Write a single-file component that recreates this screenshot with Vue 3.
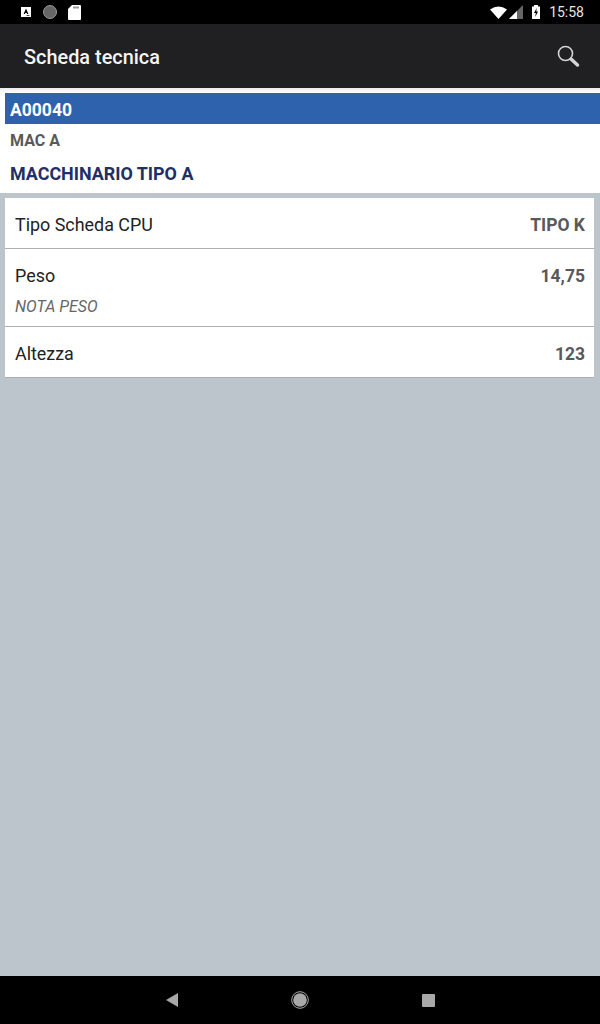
<template>
  <div class="screen">
    <div class="statusbar">
      <div class="status-left">
        <svg width="12" height="12" viewBox="0 0 12 12"><rect x="1" y="1" width="10" height="10" fill="#fff"/><path d="M6 2.600 3.600 8h1.300l.4-1h1.400l.4 1h1.300L6 2.600z" fill="#000"/><rect x="6.500" y="9" width="3" height="1" fill="#555"/></svg>
        <svg width="14" height="14" viewBox="0 0 14 14"><circle cx="7" cy="7" r="6.500" fill="#666" stroke="#999" stroke-width="1"/></svg>
        <svg width="13" height="15" viewBox="0 0 13 15"><path d="M4 0h8a1 1 0 0 1 1 1v13a1 1 0 0 1-1 1H1a1 1 0 0 1-1-1V4z" fill="#fff"/><rect x="5" y="1.500" width="6" height="2" fill="#999"/></svg>
      </div>
      <div class="status-right">
        <svg class="wifi" width="17" height="13" viewBox="0 0 17 13"><path d="M0 3.500Q8.500-2.500 17 3.500L8.500 13z" fill="#fff"/></svg>
        <svg class="signal" width="14" height="14" viewBox="0 0 14 14"><path d="M14 0v14H0z" fill="#666"/><path d="M8 6v8H0z" fill="#fff"/></svg>
        <svg class="battery" width="8" height="14" viewBox="0 0 8 14"><path d="M2 0h4v1.500h2V14H0V1.500h2z" fill="#fff"/><path d="M4.700 3 2 8h1.800l-.6 4 2.900-5.500H4.300z" fill="#000"/></svg>
        <span class="time">15:58</span>
      </div>
    </div>

    <header class="toolbar">
      <span class="title">Scheda tecnica</span>
      <svg class="search" width="24" height="24" viewBox="0 0 24 24">
        <circle cx="9.500" cy="9.500" r="7" fill="none" stroke="#d4d4d4" stroke-width="1.600"/>
        <path d="M15 15l6.500 6" stroke="#d4d4d4" stroke-width="3.400" stroke-linecap="round"/>
      </svg>
    </header>

    <main class="content">
      <section class="head">
        <div class="code">A00040</div>
        <div class="short">MAC A</div>
        <div class="name">MACCHINARIO TIPO A</div>
      </section>

      <section class="card">
        <div v-for="row in rows" :key="row.label" class="row">
          <div class="row-main">
            <span class="label">{{ row.label }}</span>
            <span class="value">{{ row.value }}</span>
          </div>
          <div v-if="row.note" class="note">{{ row.note }}</div>
        </div>
      </section>
    </main>

    <nav class="navbar">
      <svg width="12" height="14" viewBox="0 0 12 14"><path d="M12 0v14L0 7z" fill="#a8a8a8"/></svg>
      <svg width="18" height="18" viewBox="0 0 18 18"><circle cx="9" cy="9" r="8.300" fill="none" stroke="#a8a8a8" stroke-width="1"/><circle cx="9" cy="9" r="6.800" fill="#a8a8a8"/></svg>
      <svg width="13" height="13" viewBox="0 0 13 13"><rect width="13" height="13" rx="1" fill="#a8a8a8"/></svg>
    </nav>
  </div>
</template>

<script setup>
const rows = [
  { label: 'Tipo Scheda CPU', value: 'TIPO K' },
  { label: 'Peso', value: '14,75', note: 'NOTA PESO' },
  { label: 'Altezza', value: '123' }
]
</script>

<style>
html, body {
  margin: 0;
  padding: 0;
}
</style>

<style scoped>
.screen {
  width: 600px;
  height: 1024px;
  display: flex;
  flex-direction: column;
  background: #bcc5cc;
  font-family: Roboto, "Liberation Sans", sans-serif;
  overflow: hidden;
}
.statusbar {
  height: 24px;
  background: #000;
  display: flex;
  justify-content: space-between;
  align-items: center;
  flex-shrink: 0;
}
.status-left {
  display: flex;
  align-items: center;
  padding-left: 20px;
}
.status-left svg:nth-child(2) {
  margin: 0 11px 0 11px;
}
.status-right {
  display: flex;
  align-items: center;
  padding-right: 16px;
}
.wifi {
  margin-right: 2px;
}
.signal {
  margin-right: 9px;
}
.battery {
  margin-right: 9px;
}
.time {
  color: #e6e6e6;
  font-size: 14px;
}
.toolbar {
  height: 64px;
  background: #201f21;
  display: flex;
  align-items: center;
  justify-content: space-between;
  padding: 0 20px 0 24px;
  flex-shrink: 0;
}
.title {
  color: #f4f4f4;
  font-size: 19.900px;
  font-weight: 500;
  padding-top: 2px;
}
.content {
  flex: 1;
}
.head {
  background: linear-gradient(#e8ecec, #fff 5px);
  padding: 5px 0 0 5px;
  height: 105px;
  box-sizing: border-box;
}
.code {
  height: 31px;
  line-height: 34px;
  background: #2f62ad;
  color: #fff;
  font-size: 17.500px;
  font-weight: 700;
  padding-left: 5px;
}
.short {
  height: 34px;
  line-height: 34px;
  color: #59595b;
  font-size: 16px;
  font-weight: 700;
  padding-left: 5px;
}
.name {
  height: 30px;
  line-height: 32px;
  color: #212f66;
  font-size: 17.900px;
  font-weight: 700;
  padding-left: 5px;
}
.card {
  margin: 5px 6px 0 5px;
  background: #fff;
  border-bottom: 1px solid #a9b0b5;
}
.row {
  border-bottom: 1px solid #b0b0b0;
}
.row:last-child {
  border-bottom: 0;
}
.row-main {
  display: flex;
  justify-content: space-between;
  align-items: center;
  height: 50px;
  padding: 2px 9px 0 10px;
  box-sizing: border-box;
}
.label {
  color: #222;
  font-size: 17.900px;
}
.value {
  color: #59595b;
  font-size: 17.500px;
  font-weight: 700;
  padding-top: 2px;
}
.note {
  color: #666;
  font-size: 16px;
  font-style: italic;
  padding: 0 10px;
  height: 27px;
  line-height: 16px;
}
.navbar {
  height: 48px;
  background: #000;
  flex-shrink: 0;
  display: flex;
  align-items: center;
  justify-content: center;
  gap: 113px;
}
</style>
